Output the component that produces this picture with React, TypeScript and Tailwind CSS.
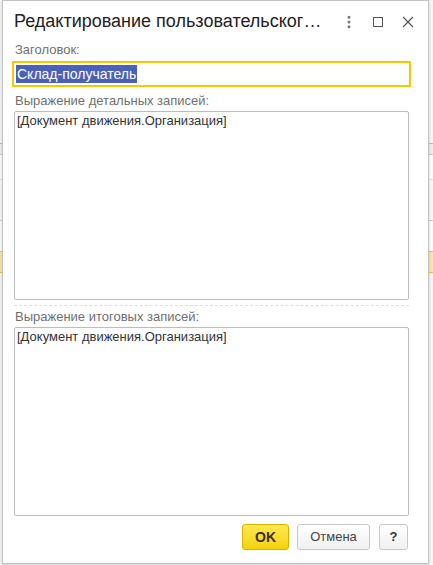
import { MoreVertical } from "lucide-react";

function Label({ children }: { children: React.ReactNode }) {
  return <div className="text-[13px] leading-[16px] text-[#6f6f6f]">{children}</div>;
}

function Area({ value }: { value: string }) {
  return (
    <div className="h-[189px] rounded-[2px] border border-[#bdbdbd] bg-white px-[2px] pt-[1px] text-[13px] leading-[16px] text-[#333]">
      {value}
    </div>
  );
}

export default function App() {
  return (
    <div
      className="relative h-[565px] w-[433px] overflow-hidden bg-[#f7f7f7]"
      style={{ fontFamily: '"Liberation Sans", Arial, sans-serif' }}
    >
      {/* page behind the dialog */}
      <div className="flex flex-col">
        <div className="h-[143px]" />
        <div className="h-[1px] bg-[#bbbbbb]" />
        <div className="h-[10px] bg-[#eeeeee]" />
        <div className="h-[1px] bg-[#cccccc]" />
        <div className="h-[24px] bg-white" />
        <div className="h-[1px] bg-[#dddddd]" />
        <div className="h-[40px] bg-[#fafafa]" />
        <div className="h-[1px] bg-[#cccccc]" />
        <div className="h-[30px] bg-white" />
        <div className="h-[22px] border-y border-[#e8c33a] bg-[#fbe7a6]" />
      </div>

      {/* dialog */}
      <div className="absolute left-[2px] top-0 flex h-[564px] w-[427px] flex-col border border-[#c4c4c4] bg-white pl-[9px] pr-[19px] shadow-[0_1px_3px_rgba(0,0,0,0.2)]">
        <div className="flex h-[41px] items-center">
          <div className="flex-1 truncate pl-[2px] text-[18px] text-[#222]">
            Редактирование пользовательског…
          </div>
          <div className="flex items-center">
            <MoreVertical size={16} strokeWidth={2.5} className="mr-[16px] text-[#777]" />
            <div className="mr-[19px] h-[10px] w-[10px] border border-[#555]" />
            <svg width="12" height="12" viewBox="0 0 12 12" className="mr-[-5px]">
              <path d="M1 1 L11 11 M11 1 L1 11" stroke="#555" strokeWidth="1.2" />
            </svg>
          </div>
        </div>

        <div className="pl-[3px]">
          <Label>Заголовок:</Label>
        </div>
        <div className="mr-[-2px] mt-[3px] flex h-[26px] items-center border-2 border-[#f5c800] px-[2px]">
          <span className="bg-[#4a62b6] px-[1px] text-[14px] leading-[18px] text-white">
            Склад-получатель
          </span>
        </div>

        <div className="mt-[6px] pl-[3px]">
          <Label>Выражение детальных записей:</Label>
        </div>
        <div className="mt-[2px] pl-[2px]">
          <Area value="[Документ движения.Организация]" />
        </div>

        <div className="ml-[2px] mt-[5px] border-t border-dashed border-[#dcdcdc]" />

        <div className="mt-[3px] pl-[3px]">
          <Label>Выражение итоговых записей:</Label>
        </div>
        <div className="mt-[2px] pl-[2px]">
          <Area value="[Документ движения.Организация]" />
        </div>

        <div className="mt-[8px] flex justify-end gap-[8px] pr-[1px]">
          <button className="h-[26px] w-[47px] rounded-[3px] border border-[#d6b400] bg-gradient-to-b from-[#ffe84a] to-[#f5d200] text-[14px] font-bold text-[#333]">
            OK
          </button>
          <button className="h-[26px] w-[73px] rounded-[3px] border border-[#c8c8c8] bg-gradient-to-b from-white to-[#f0f0f0] text-[13px] text-[#444]">
            Отмена
          </button>
          <button className="ml-[1px] h-[26px] w-[29px] rounded-[3px] border border-[#c8c8c8] bg-gradient-to-b from-white to-[#f0f0f0] text-[13px] font-bold text-[#333]">
            ?
          </button>
        </div>
      </div>
    </div>
  );
}
